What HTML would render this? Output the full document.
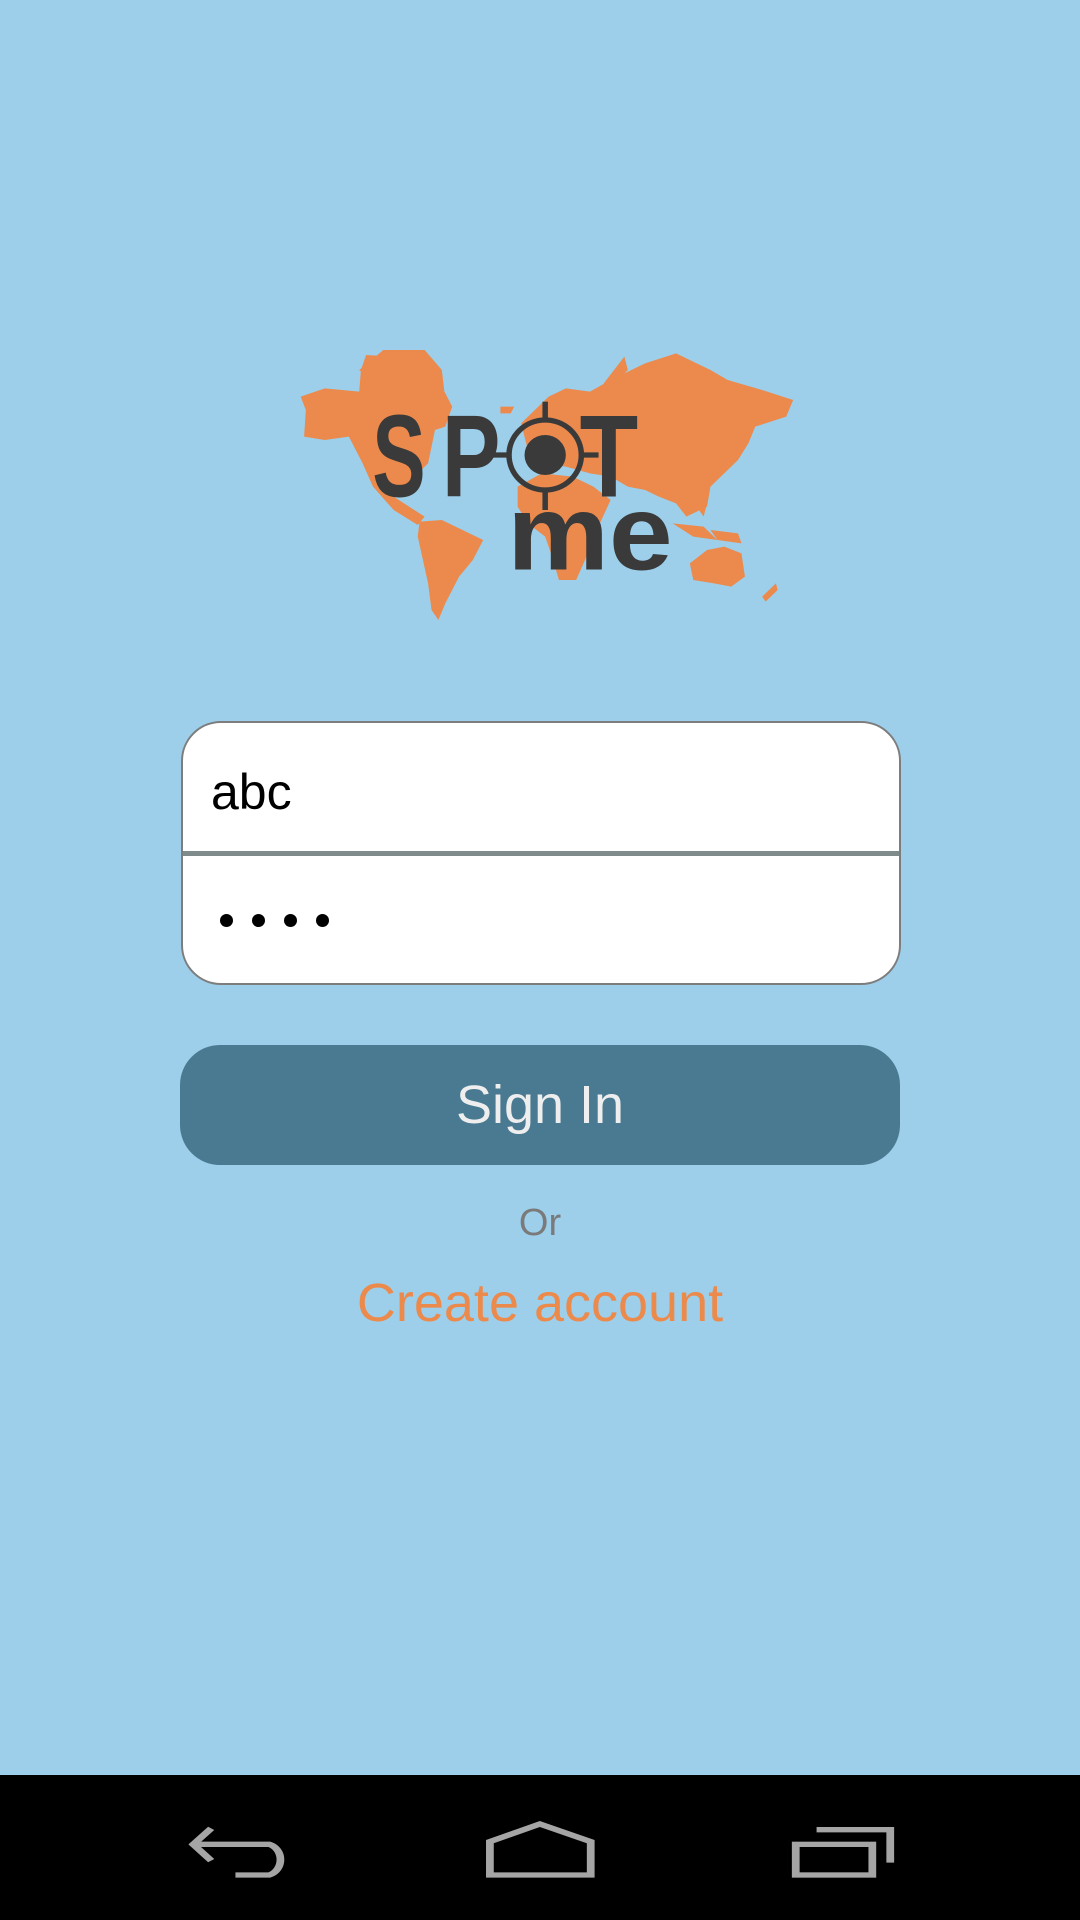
<!DOCTYPE html>
<html><head><meta charset="utf-8"><style>
html,body{margin:0;padding:0}
body{width:1080px;height:1920px;background:#9dcfeb;position:relative;overflow:hidden;font-family:"Liberation Sans",sans-serif}
.box{position:absolute;left:181px;top:721px;width:716px;height:260px;background:#fff;border:2px solid #7d7d7d;border-radius:40px;overflow:hidden}
.div{position:absolute;left:0;right:0;top:128px;height:5px;background:#7f8a8a}
.abc{position:absolute;left:28px;top:40px;font-size:50px;color:#000}
.dot{position:absolute;top:191px;width:13px;height:13px;border-radius:50%;background:#000}
.btn{position:absolute;left:180px;top:1045px;width:720px;height:120px;background:#497a91;border-radius:40px;color:#eee;font-size:54px;text-align:center;line-height:120px}
.or{position:absolute;left:0;width:1080px;top:1202px;text-align:center;font-size:38px;color:#7a7a7a}
.ca{position:absolute;left:0;width:1080px;top:1272px;text-align:center;font-size:54px;color:#ec8a4c}
.nav{position:absolute;left:0;top:1775px;width:1080px;height:145px;background:#000}
</style></head><body>
<svg style="position:absolute;left:280px;top:330px" width="540" height="300" viewBox="0 0 1568 900" preserveAspectRatio="none">
<g fill="#eb8a4c">
<polygon points="60,200 130,175 230,185 235,120 250,75 330,80 420,70 470,170 500,230 480,290 450,300 430,400 360,470 330,500 420,560 400,585 330,540 270,470 240,400 200,320 130,330 70,320 75,240"/>
<polygon points="230,120 300,60 420,60 470,120 480,210 420,190 360,140 280,160"/>
<polygon points="405,575 470,570 530,600 590,630 560,690 520,740 480,820 460,870 440,840 430,760 415,690 400,620"/>
<polygon points="640,230 680,230 670,250 640,250"/>
<polygon points="940,160 1000,80 1010,120 960,170"/>
<polygon points="700,280 780,200 830,175 900,185 960,150 1060,100 1150,70 1250,120 1300,150 1400,180 1490,210 1470,260 1380,290 1360,340 1330,390 1280,440 1250,470 1240,530 1180,560 1150,520 1100,500 1060,480 1010,470 960,440 900,430 830,410 760,400 720,360"/>
<polygon points="690,470 760,430 850,440 910,470 960,510 920,600 890,680 860,750 810,750 790,680 770,620 720,580 690,530"/>
<polygon points="1190,700 1240,660 1290,650 1340,670 1350,740 1310,770 1260,760 1200,750"/>
<polygon points="1140,580 1230,590 1270,630 1200,620"/>
<polygon points="1250,600 1330,610 1340,640 1270,630"/>
<polygon points="1400,800 1440,760 1445,780 1410,815"/>
<polygon points="1210,530 1240,520 1230,560"/>
</g>
<g fill="#3a3a3a" font-family="Liberation Sans,sans-serif" font-weight="bold">
<text x="268" y="500" font-size="350" textLength="155" lengthAdjust="spacingAndGlyphs">S</text>
<text x="470" y="500" font-size="350" textLength="170" lengthAdjust="spacingAndGlyphs">P</text>
<text x="870" y="500" font-size="350" textLength="170" lengthAdjust="spacingAndGlyphs">T</text>
<text x="660" y="718" font-size="320" textLength="480" lengthAdjust="spacingAndGlyphs">me</text>
</g>
<g stroke="#3a3a3a" stroke-width="16" fill="none">
<circle cx="770" cy="375" r="105"/>
<line x1="770" y1="215" x2="770" y2="270"/>
<line x1="770" y1="480" x2="770" y2="540"/>
<line x1="610" y1="375" x2="665" y2="375"/>
<line x1="875" y1="375" x2="925" y2="375"/>
</g>
<circle cx="770" cy="375" r="60" fill="#3a3a3a"/>
</svg>
<div class="box"><div class="abc">abc</div><div class="div"></div>
<div class="dot" style="left:37px"></div><div class="dot" style="left:69px"></div><div class="dot" style="left:101px"></div><div class="dot" style="left:133px"></div></div>
<div class="btn">Sign In</div>
<div class="or">Or</div>
<div class="ca">Create account</div>
<div class="nav"></div>
<svg style="position:absolute;left:170px;top:1790px" width="760" height="110" viewBox="0 0 1568 330" preserveAspectRatio="none">
<g fill="none" stroke="#a5a5a5" stroke-width="16">
<polyline points="85,115 48,163 85,212"/>
<path d="M48,163 H205 A32,48 0 0 1 205,255 H135"/>
<polygon points="660,155 763,102 868,155 868,255 660,255"/>
<rect x="1291" y="163" width="158" height="92"/>
<polyline points="1334,119 1486,119 1486,218"/>
</g>
</svg>
</body></html>
